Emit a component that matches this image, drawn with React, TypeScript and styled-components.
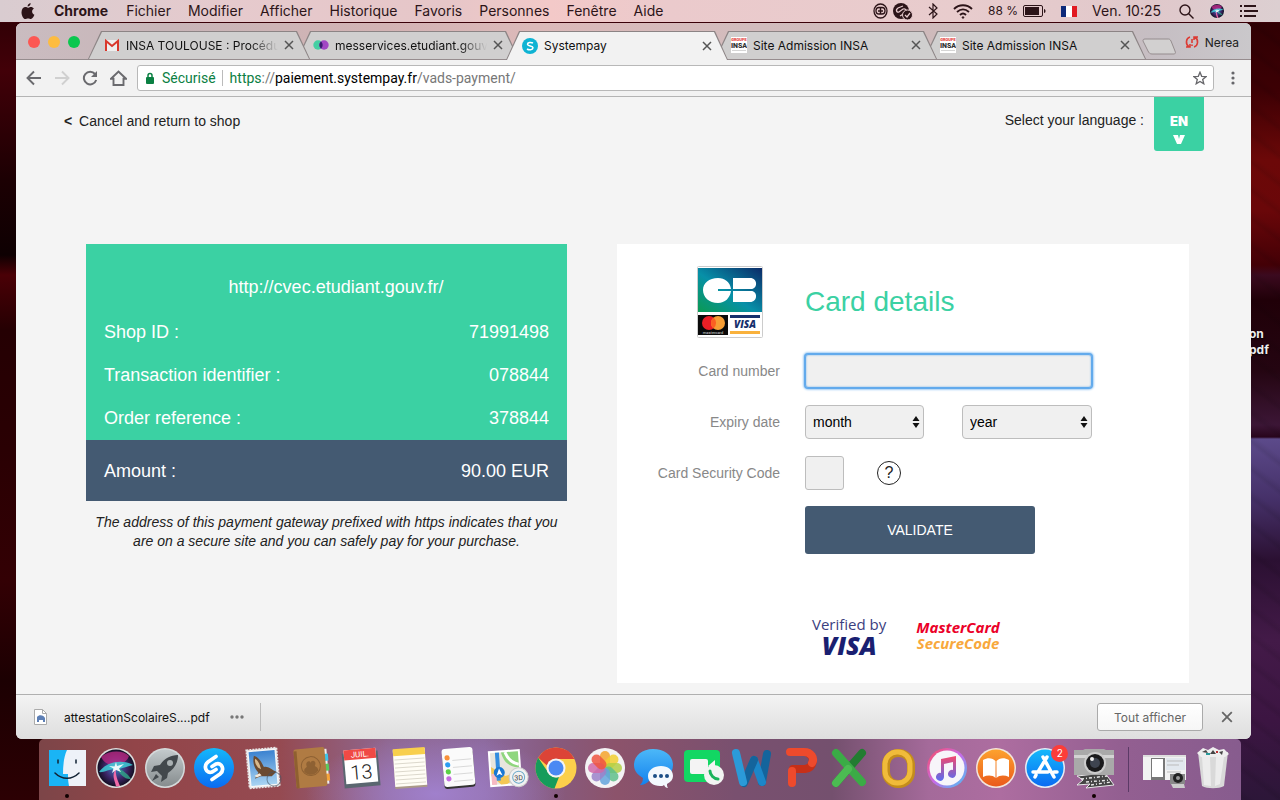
import React from 'react';
import styled, { createGlobalStyle, css } from 'styled-components';

const ui = `Inter, Roboto, "Liberation Sans", sans-serif`;
const body = `"Liberation Sans", Arial, sans-serif`;
const green = '#3bd1a3';
const slate = '#445a72';

const Global = createGlobalStyle`
  *, *::before, *::after { box-sizing: border-box; }
  body { margin: 0; font-family: ${ui}; }
  button, input, select { font: inherit; color: inherit; margin: 0; }
  svg { display: block; flex: none; }
  h1, h2, p, dl, dd { margin: 0; }
`;

const Desktop = styled.div`
  position: relative;
  min-height: 100vh;
  display: flex;
  flex-direction: column;
  overflow: hidden;
  background: linear-gradient(180deg, #2a0004 0, #420008 70px, #1c0003 180px, #0e0002 255px, #4a0006 275px, #250003 330px, #2a0003 450px, #330004 580px, #1c0002 680px, #2c0003 800px);
`;

const RightWallpaper = styled.div`
  position: absolute;
  top: 0;
  right: 0;
  bottom: 0;
  width: 60px;
  background:
    repeating-linear-gradient(38deg, #0000 0 12px, #00000014 16px, #0000 22px),
    linear-gradient(180deg, #2c0003 0, #3c0004 90px, #6c0808 160px, #6a0709 210px, #430006 265px, #3b0a1f 275px, #200008 300px, #240511 370px, #3c1636 425px, #28051c 437px, #5c4a8a 439px, #453068 500px, #2b1032 560px, #431a48 640px, #3c1542 720px, #2c1638 800px);
`;

const FileLabel = styled.span`
  position: absolute;
  top: 326px;
  right: 9px;
  width: 22px;
  font: bold 12px/16px Inter, sans-serif;
  color: #eee;
  text-shadow: 0 1px 2px #000;
`;

const MenuBar = styled.header`
  position: relative;
  display: flex;
  justify-content: space-between;
  height: 23px;
  padding: 0 22px 0 21px;
  border-bottom: 1px solid #3a0008;
  background: linear-gradient(90deg, #d9ccd0 0, #e6cacd 18%, #e6c6c8 35%, #f3c9c8 43%, #ebcacc 52%, #e8cccd 75%, #e0c8cb 90%, #dccfd1 100%);
  color: #2c1418;
  font-size: 14px;
  line-height: 22px;
`;

const MenuGroup = styled.nav<{ $gap: number }>`
  display: flex;
  align-items: center;
  gap: ${(p) => p.$gap}px;
`;

const MenuButton = styled.button<{ $bold?: boolean }>`
  padding: ${(p) => (p.$bold ? '0 1px 0 2px' : '0')};
  border: 0;
  background: none;
  white-space: nowrap;
  font-weight: ${(p) => (p.$bold ? 700 : 400)};
`;

const StatusText = styled.span<{ $small?: boolean }>`
  font-size: ${(p) => (p.$small ? 12 : 14)}px;
  white-space: nowrap;
`;

const StatusPair = styled.span`
  display: flex;
  align-items: center;
  gap: 5px;
`;

const Window = styled.main`
  position: relative;
  flex: 1;
  display: flex;
  flex-direction: column;
  margin: 0 29px 0 16px;
  border-radius: 6px;
  overflow: hidden;
  background: #f4f4f4;
`;

const TabStrip = styled.div`
  display: flex;
  height: 37px;
  padding: 8px 12px 0 12px;
  border-bottom: 1px solid #968c8e;
  background: linear-gradient(90deg, #cabcc0 0, #c8b5b8 12%, #d3b3b4 30%, #dcb9b9 42%, #d2bcbd 60%, #cdb9ba 80%, #c6bfc4 93%, #cac8cb 100%);
`;

const Lights = styled.div`
  display: flex;
  gap: 8px;
  width: 60px;
  padding-top: 5px;
`;

const Light = styled.button<{ $color: string }>`
  width: 12px;
  height: 12px;
  padding: 0;
  border: 0;
  border-radius: 50%;
  background: ${(p) => p.$color};
`;

const Tab = styled.div<{ $active?: boolean; $order: number }>`
  position: relative;
  z-index: ${(p) => (p.$active ? 10 : p.$order)};
  flex: 0 1 222px;
  min-width: 0;
  height: ${(p) => (p.$active ? 29 : 28)}px;
  margin-right: -13px;
  padding: 0 16px 0 16px;
  display: flex;
  align-items: center;
  gap: 6px;
  font-size: 12px;
  color: #111;
  &::before, &::after {
    content: '';
    position: absolute;
    inset: 0;
    z-index: -2;
    background: #8c8485;
    clip-path: polygon(13px 0, calc(100% - 13px) 0, 100% 100%, 0 100%);
  }
  &::after {
    inset: 1px 1px 0 1px;
    z-index: -1;
    background: ${(p) => (p.$active ? '#f2f2f2' : '#d0cfcf')};
  }
`;

const TabTitle = styled.button<{ $fade?: boolean }>`
  flex: 1;
  min-width: 0;
  padding: 0;
  border: 0;
  background: none;
  overflow: hidden;
  text-align: left;
  white-space: nowrap;
  ${(p) => p.$fade && css`mask-image: linear-gradient(90deg, #000 82%, #0000 100%);`}
`;

const IconButton = styled.button`
  display: grid;
  place-items: center;
  flex: none;
  padding: 0;
  border: 0;
  background: none;
`;

const Profile = styled.div`
  display: flex;
  align-items: center;
  gap: 6px;
  height: 22px;
  margin-left: auto;
  font-size: 12px;
  color: #222;
`;

const NewTab = styled(IconButton)`
  margin: 0 0 0 9px;
  align-self: flex-start;
  padding-top: 7px;
`;

const Toolbar = styled.div`
  display: flex;
  align-items: center;
  gap: 12px;
  height: 37px;
  padding: 0 16px 0 10px;
  border-bottom: 1px solid #b4b4b4;
  background: #f2f2f2;
`;

const Omnibox = styled.div`
  flex: 1;
  display: flex;
  align-items: center;
  height: 26px;
  margin: 0 5px 0 -2px;
  padding: 0 6px 0 7px;
  border: 1px solid #b8b8b8;
  border-radius: 3px;
  background: #fff;
  font-family: Roboto, sans-serif;
  font-size: 14px;
  line-height: 16px;
`;

const Secure = styled.span`
  margin-left: 7px;
  padding-right: 6px;
  border-right: 1px solid #bbb;
  color: #0b8043;
`;

const Url = styled.span`
  flex: 1;
  margin-left: 7px;
  color: #777;
  b { font-weight: 400; color: #0b8043; }
  em { font-style: normal; color: #000; }
`;

const Page = styled.div`
  flex: 1;
  font-family: ${body};
  color: #222;
  font-size: 14px;
`;

const PageHeader = styled.header`
  display: flex;
  justify-content: space-between;
  padding: 0 47px 0 48px;
  line-height: 16px;
`;

const Cancel = styled.a`
  margin-top: 16px;
  color: #222;
  text-decoration: none;
  b { margin-right: 3px; }
`;

const Language = styled.div`
  display: flex;
  gap: 10px;
  > span { margin-top: 15px; }
`;

const LanguageButton = styled.button`
  display: flex;
  flex-direction: column;
  align-items: center;
  gap: 7px;
  width: 50px;
  height: 54px;
  padding: 17px 0 0;
  border: 0;
  border-radius: 0 0 3px 3px;
  background: ${green};
  color: #fff;
  font: 900 13px/14px Inter, sans-serif;
`;

const Columns = styled.div`
  display: grid;
  grid-template-columns: 481fr 572fr;
  gap: 50px;
  align-items: start;
  padding: 93px 62px 11px 70px;
`;

const Summary = styled.section`
  color: #fff;
  font-size: 18px;
  line-height: 43px;
`;

const SummaryTop = styled.div`
  padding: 22px 18px 0;
  background: ${green};
`;

const ShopUrl = styled.h1`
  padding-left: 19px;
  margin-bottom: 2px;
  font: inherit;
  text-align: center;
`;

const Line = styled.dl`
  display: flex;
  justify-content: space-between;
`;

const Amount = styled.div`
  padding: 10px 18px 8px;
  background: ${slate};
`;

const Note = styled.p`
  margin-top: 12px;
  color: #222;
  font-size: 14px;
  font-style: italic;
  line-height: 19px;
  text-align: center;
`;

const CardPanel = styled.form`
  padding: 22px 0 27px;
  background: #fff;
`;

const FormGrid = styled.div`
  display: grid;
  grid-template-columns: 163px 287px;
  column-gap: 25px;
  row-gap: 17px;
  align-items: center;
`;

const BrandCell = styled.div`
  display: flex;
  justify-content: flex-end;
  padding-right: 16px;
  height: 71px;
`;

const FormTitle = styled.h2`
  color: ${green};
  font-size: 28px;
  font-weight: 400;
`;

const Label = styled.label`
  color: #888;
  text-align: right;
`;

const Field = styled.input<{ $w: string; $focused?: boolean }>`
  width: ${(p) => p.$w};
  height: 34px;
  padding: 0 8px;
  border: 1px solid ${(p) => (p.$focused ? '#62aaec' : '#bdbdbd')};
  border-radius: 3px;
  outline: 0;
  background: #f0f0f0;
  ${(p) => p.$focused && css`box-shadow: 0 0 0 1px #62aaec, 0 0 2px 2px #a5cff5, inset 0 0 2px #62aaec;`}
`;

const FieldRow = styled.div<{ $gap: number }>`
  display: flex;
  align-items: center;
  gap: ${(p) => p.$gap}px;
`;

const SelectBox = styled.div<{ $grow: number }>`
  flex: ${(p) => p.$grow} 1 0;
  display: grid;
  align-items: center;
  > * { grid-area: 1 / 1; }
  svg { justify-self: end; margin-right: 4px; pointer-events: none; }
`;

const Select = styled.select`
  appearance: none;
  width: 100%;
  height: 34px;
  padding: 0 7px;
  border: 1px solid #bdbdbd;
  border-radius: 4px;
  background: #f0f0f0;
  color: #000;
`;

const Help = styled.button`
  width: 24px;
  height: 24px;
  padding: 0;
  border: 1px solid #222;
  border-radius: 50%;
  background: #fff;
  font-size: 16px;
  line-height: 22px;
`;

const Actions = styled.div`
  margin: 16px 0 0 188px;
`;

const Validate = styled.button`
  width: 230px;
  height: 48px;
  border: 0;
  border-radius: 3px;
  background: ${slate};
  color: #fff;
`;

const Trust = styled.div`
  display: flex;
  align-items: center;
  gap: 30px;
  margin: 60px 0 0 7px;
`;

const TrustMark = styled.div`
  font-family: "Open Sans", sans-serif;
  text-align: center;
`;

const MarkLine = styled.div<{ $color: string; $size: number; $lh: number; $weight: number; $slant?: boolean }>`
  color: ${(p) => p.$color};
  font-size: ${(p) => p.$size}px;
  line-height: ${(p) => p.$lh}px;
  font-weight: ${(p) => p.$weight};
  font-style: ${(p) => (p.$slant ? 'italic' : 'normal')};
`;

const Downloads = styled.footer`
  display: flex;
  align-items: center;
  height: 45px;
  padding: 0 18px;
  border-top: 1px solid #b0b0b0;
  background: linear-gradient(#f3f3f3, #dedede);
  color: #111;
  font-size: 12px;
`;

const FileName = styled.a`
  margin: 0 20px 0 17px;
  color: #111;
  text-decoration: none;
`;

const Divider = styled.span`
  width: 1px;
  height: 28px;
  margin-left: 16px;
  background: #bbb;
`;

const ShowAll = styled.button`
  width: 106px;
  height: 28px;
  margin: 0 18px 0 auto;
  padding: 0;
  border: 1px solid #aaa;
  border-radius: 3px;
  background: linear-gradient(#fff, #f6f6f6);
  color: #666;
`;

const Dock = styled.nav`
  position: relative;
  display: flex;
  height: 61px;
  margin: 0 39px;
  padding: 0 4px;
  border-radius: 5px 5px 0 0;
  background:
    radial-gradient(ellipse 130px 60px at 33% 90%, #a080cc, #a080cc00),
    linear-gradient(90deg, #7c4548 0, #924549 8%, #954a51 20%, #8f6790 29%, #8d6a9e 37%, #875a7d 43%, #8c536b 48%, #79506f 58%, #74506e 66%, #a46a9a 74%, #ad6da0 80%, #935f91 90%, #875c8e 100%);
`;

const DockItem = styled.button<{ $running?: boolean }>`
  position: relative;
  flex: 1 1 0;
  min-width: 0;
  display: flex;
  justify-content: center;
  padding: 8px 0 0;
  border: 0;
  background: none;
  svg { overflow: visible; }
  ${(p) => p.$running && css`
    &::after {
      content: '';
      position: absolute;
      bottom: 2px;
      left: calc(50% - 2px);
      width: 4px;
      height: 4px;
      border-radius: 50%;
      background: #100;
    }
  `}
`;

const DockRule = styled.span`
  width: 1px;
  height: 45px;
  margin: 8px 10px 0 10px;
  background: #5b3a66;
`;

const Badge = styled.span`
  position: absolute;
  top: 6px;
  right: 1px;
  width: 17px;
  height: 17px;
  border-radius: 50%;
  background: #fc3d39;
  color: #fff;
  font-size: 10px;
  line-height: 17px;
`;

const Cross = ({ size = 10, color = '#555' }: { size?: number; color?: string }) => (
  <svg width={size} height={size} viewBox="0 0 10 10" stroke={color} strokeWidth="1.5"><path d="M1 1l8 8M9 1L1 9" /></svg>
);

const SiriArt = () => (
  <>
    <circle cx="21" cy="21" r="20" fill="#ddd" />
    <circle cx="21" cy="21" r="18.5" fill="url(#siri)" />
    <path d="M6 10C14 3 28 3 34 9C32 15 26 17 21 20C14 18 9 16 6 10Z" fill="#c02a86" opacity=".75" />
    <path d="M4 25C12 14 28 12 38 18C30 20 26 22 21 22C14 22 8 26 4 25Z" fill="#3ecfd8" opacity=".85" />
    <path d="M21 21C20 28 23 34 25 39L21 39.500C20 33 16 29 21 21Z" fill="#f06aa8" />
    <path d="M21 21C27 22 34 28 36 32C30 33 25 27 21 21Z" fill="#2fa98a" opacity=".8" />
    <path d="M21 15L22 19L29 17L24 21.500L26 25L21 23L17 26L18.500 21.500L14 19L19.500 19.500Z" fill="#fff" opacity=".9" />
  </>
);

const INSA = () => (
  <svg width="16" height="16" viewBox="0 0 16 16">
    <path fill="#fff" d="M0 0h16v16H0z" />
    <text x="8" y="4" fontSize="4" fontWeight="900" fill="#e5403a" textAnchor="middle" fontFamily="Roboto">GROUPE</text>
    <text x="8" y="11" fontSize="7" fontWeight="900" fill="#333" textAnchor="middle" fontFamily="Roboto">INSA</text>
    <path stroke="#aaa" strokeWidth=".5" d="M1 13.500h14" />
  </svg>
);

const favicons: Record<string, React.ReactNode> = {
  gmail: (
    <svg width="16" height="16" viewBox="0 0 16 16"><path fill="#eee" d="M1 3h14v11H1z" /><path fill="none" stroke="#d9382c" strokeWidth="2" d="M2 14V4l6 5 6-5v10" /></svg>
  ),
  mes: (
    <svg width="16" height="16" viewBox="0 0 16 16"><circle cx="5" cy="8" r="4.700" fill="#43cfa3" /><circle cx="11" cy="8" r="4.700" fill="#a247c4" /><path fill="#3a1c70" d="M8 4.400a4.700 4.700 0 0 1 0 7.200a4.700 4.700 0 0 1 0-7.200" /></svg>
  ),
  pay: (
    <svg width="16" height="16" viewBox="0 0 16 16"><circle cx="8" cy="8" r="8" fill="#0eb3d3" /><path fill="none" stroke="#fff" strokeWidth="1.500" d="M11 5C9 4 5.500 4.200 5.500 6.300S11 7.700 11 9.800S7 12.300 5 11" /></svg>
  ),
  insa: <INSA />,
};

const tabs = [
  { icon: 'gmail', title: 'INSA TOULOUSE : Procédure', fade: true },
  { icon: 'mes', title: 'messervices.etudiant.gouv.fr', fade: true },
  { icon: 'pay', title: 'Systempay', active: true },
  { icon: 'insa', title: 'Site Admission INSA' },
  { icon: 'insa', title: 'Site Admission INSA' },
];

const petals = ['#f4a52c', '#f2cf30', '#b3cf45', '#5fbf8a', '#63a5dc', '#9a82c9', '#d06aa8', '#ee5540'];

const dockIcons: { name: string; running?: boolean; badge?: string; art: React.ReactNode }[] = [
  { name: 'Finder', running: true, art: <>
    <path fill="#1ab4f5" d="M3 3h37v36H3z" /><path fill="#eef2f8" d="M21 3h19v36H23c-1-5-1-8-1-12h-5C17 18 18 9 21 3z" />
    <path fill="none" stroke="#123" strokeWidth="1.500" strokeLinecap="round" d="M12 13v3M30 13v3M9 26c7 7 17 7 24 0" /></> },
  { name: 'Siri', art: <SiriArt /> },
  { name: 'Launchpad', art: <>
    <circle cx="21" cy="21" r="20" fill="#d5dadb" /><circle cx="21" cy="21" r="18.500" fill="url(#silver)" />
    <path fill="#42484c" d="M34 8C26 8 20 12 16 18L10 19L7 25L13 24L18 29L17 35L23 31L24 26C30 22 34 16 34 8ZM12 27L8 34L15 30Z" /><circle cx="26" cy="16" r="3" fill="#a9b0b2" /></> },
  { name: 'Shazam', art: <>
    <circle cx="21" cy="21" r="20" fill="url(#blue)" />
    <path fill="none" stroke="#fff" strokeWidth="3.700" strokeLinecap="round" d="M23 9.500L15 15C10 19 13 27 19 25L23 22.500M19 32.500L27 27C32 23 29 15 23 17L19 19.500" /></> },
  { name: 'Mail', art: <g transform="rotate(-5 21 21)">
    <path fill="#f7f7f7" stroke="#e8e8e8" strokeWidth="2" strokeDasharray="2 1" d="M6 2h30v38H6z" /><path fill="url(#sky)" d="M8 4h26v34H8z" />
    <path fill="#6b4a30" d="M13 8C18 10 20 15 22 20C26 19 29 23 34 26L29 30L18 29L12 31L16 25C12 20 11 14 13 8Z" /><path fill="#d8b98b" d="M14 11c3 2 4 6 5 11l-3-2c-2-3-3-6-2-9z" /><path fill="#f2e8da" d="M12 28l5-2 2 2-5 2z" /><circle cx="31" cy="33" r="7" fill="none" stroke="#456" opacity=".6" /></g> },
  { name: 'Contacts', art: <g transform="rotate(-5 21 21)">
    <path fill="#efefef" d="M33 3h4v35h-4z" /><path fill="#3fc6e8" d="M34 8h4v7h-4z" /><path fill="#5cc85c" d="M34 18h4v7h-4z" /><path fill="#f5a43a" d="M34 28h4v7h-4z" />
    <rect x="4" y="1" width="31" height="39" rx="2" fill="#b07b43" /><path fill="#8f6030" d="M4 3h3v37H4z" /><circle cx="20" cy="19" r="9.500" fill="none" stroke="#8e6133" /><path fill="#8e6133" d="M13 24c0-4 2-3 3-5-2-5 4-7 4-3 1-4 7-2 4 3 1 2 3 1 3 5-4 5-10 5-14 0" /></g> },
  { name: 'Calendar', art: <g transform="rotate(-5 21 21)">
    <path fill="#5a6670" d="M3 5h36v35H3z" /><path fill="#fff" d="M5 2h32v34H5z" /><path fill="#f04a45" d="M5 2h32v10H5z" />
    <text x="21" y="10" fontSize="8" fill="#fff" textAnchor="middle" fontFamily="Roboto">JUIL.</text><text x="21" y="32" fontSize="20" fill="#222" textAnchor="middle" fontWeight="300" fontFamily="Roboto">13</text></g> },
  { name: 'Notes', art: <g transform="rotate(-4 21 21)">
    <path fill="#a98" d="M5 5h32v36H5z" /><path fill="#fffdf5" d="M5 2h32v37H5z" /><path fill="#f8cf4c" d="M5 1h32v7H5z" /><path stroke="#cfcabd" strokeWidth=".7" d="M6 12h30M6 16h30M6 20h30M6 24h30M6 28h30M6 32h30M6 36h30" /></g> },
  { name: 'Rappels', art: <g transform="rotate(-5 21 21)">
    <rect x="6" y="4" width="31" height="37" rx="3" fill="#333" /><rect x="6" y="1" width="31" height="38" rx="3" fill="#fbfbfb" />
    <circle cx="11" cy="10" r="2.600" fill="#f9913a" /><circle cx="11" cy="17" r="2.600" fill="#2a9df2" /><circle cx="11" cy="24" r="2.600" fill="#5bd147" /><circle cx="11" cy="31" r="2.600" fill="#c56be0" />
    <path stroke="#ccc" strokeWidth=".7" d="M16 13h19M16 20h19M16 27h19M16 34h19" /></g> },
  { name: 'Plans', art: <g transform="rotate(-4 21 21)">
    <path fill="#fff" d="M3 3h32v36H3z" /><path fill="#e8e6de" d="M5 5h28v32H5z" /><path fill="#8fd67e" d="M16 5h17v16c-9 0-15-6-17-16z" /><path fill="#f3c755" d="M5 19l14 10 14-4v5l-13 7H14L5 28z" /><path fill="#f6b9c3" d="M5 26h5v11H5z" />
    <path fill="none" stroke="#fff" strokeWidth="3" d="M20 5c3 9 8 12 13 13" /><path stroke="#338de0" strokeWidth="4" d="M12 5v28" />
    <circle cx="13" cy="25" r="5.500" fill="#1878d4" /><path fill="#fff" d="M13 21l3 7-3-1.500-3 1.500z" /><circle cx="32" cy="31" r="9.500" fill="#f2f2f2" stroke="#ccc" /><circle cx="32" cy="31" r="6" fill="none" stroke="#6ba9c8" /><text x="32" y="34" fontSize="7" textAnchor="middle" fontFamily="Roboto" fill="#444">3D</text></g> },
  { name: 'Chrome', running: true, art: <>
    <circle cx="21" cy="21" r="20.500" fill="#fcd04b" /><path fill="#dc4437" d="M3.200 10.800A20.500 20.500 0 0 1 39.500 12H21a9 9 0 0 0-8.500 7z" /><path fill="#159c5b" d="M3.200 10.800L13.200 25.500A9 9 0 0 0 24 30L19.500 41.400A20.500 20.500 0 0 1 3.200 10.800" />
    <circle cx="21" cy="21" r="9.500" fill="#f4f4f4" /><circle cx="21" cy="21" r="7.500" fill="#4a89f3" /></> },
  { name: 'Photos', art: <>
    <circle cx="21" cy="21" r="20" fill="#f4f2f4" />
    {petals.map((c, i) => <rect key={c} x="16" y="4" width="10" height="17" rx="5" fill={c} opacity=".85" transform={`rotate(${i * 45} 21 21)`} />)}</> },
  { name: 'Messages', art: <>
    <path fill="url(#blue2)" d="M20 2C9 2 1 9 1 18c0 6 4 10 9 13 0 3-1 5-3 7 4 0 7-2 9-4 14 1 24-6 24-16S31 2 20 2z" /><path fill="#f3f8fd" d="M28 19c-7 0-13 4-13 10s5 10 12 10c2 0 3 0 4-1 1 2 2 3 4 3-1-1-1-3-1-4 4-2 6-5 6-8 0-6-5-10-12-10z" />
    <circle cx="22" cy="29" r="2" fill="#1c4f86" /><circle cx="28" cy="29" r="2" fill="#1c4f86" /><circle cx="34" cy="29" r="2" fill="#1c4f86" /></> },
  { name: 'FaceTime', art: <>
    <rect x="2" y="3" width="36" height="32" rx="4" fill="#12d763" /><rect x="8" y="12" width="18" height="15" rx="2" fill="#f4f4f4" /><path fill="#f4f4f4" d="M26 19l7-6v13z" />
    <circle cx="32" cy="28" r="10" fill="#f2f4f2" /><path fill="none" stroke="#1bb35a" strokeWidth="3" strokeLinecap="round" d="M28 24c0 4 4 8 8 8" /></> },
  { name: 'Word', art: <g fill="none" strokeWidth="8" strokeLinecap="round" strokeLinejoin="round">
    <path stroke="#14649c" d="M31 35L36 7" /><path stroke="#1c86c8" d="M23 13L31 35" /><path stroke="#14649c" d="M13 36L23 13" /><path stroke="#2b9ad8" d="M5 6L12 35" /></g> },
  { name: 'PowerPoint', art: <g fill="none" strokeWidth="8" strokeLinecap="round" strokeLinejoin="round">
    <path stroke="#c62f18" d="M29 7c6 3 5 14-4 15H13" /><path stroke="#ee4a2c" d="M10 5h14c7 0 11 6 8 11M12 24v12" /></g> },
  { name: 'Excel', art: <g fill="none" strokeWidth="8" strokeLinecap="round">
    <path stroke="#227c31" d="M34 6L8 36" /><path stroke="#3bab46" d="M8 6L34 35" /><path stroke="#4cbb52" d="M20 22L8 36" /></g> },
  { name: 'Outlook', art: <>
    <rect x="9" y="6" width="25" height="31" rx="12" fill="none" stroke="#c48d1b" strokeWidth="8" /><rect x="8" y="5" width="25" height="31" rx="12" fill="none" stroke="#f0bb3a" strokeWidth="5" /></> },
  { name: 'iTunes', art: <>
    <circle cx="21" cy="21" r="20" fill="url(#tunes)" /><circle cx="21" cy="21" r="17.500" fill="#f7f5fa" />
    <path fill="url(#note)" d="M15 12l15-3v18a4 4 0 1 1-3-4v-8l-9 2v13a4 4 0 1 1-3-4z" /></> },
  { name: 'iBooks', art: <>
    <circle cx="21" cy="21" r="20" fill="#f2e5dc" /><circle cx="21" cy="21" r="18.500" fill="url(#orange)" />
    <path fill="#fff" d="M8 13c5-3 10-2 12.500 1v17c-3-3-8-3-12.500-1zM34 13c-5-3-10-2-12.500 1v17c3-3 8-3 12.500-1z" /></> },
  { name: 'App Store', badge: '2', art: <>
    <circle cx="21" cy="21" r="20" fill="#e8eef5" /><circle cx="21" cy="21" r="18.500" fill="url(#blue)" />
    <path fill="none" stroke="#fff" strokeWidth="3.500" strokeLinecap="round" d="M19 10L30 30M23 10L14 25M9 25h15M30 25h3M11 30l1-2" /></> },
  { name: 'Capture', running: true, art: <>
    <path fill="#444" d="M4 29l28-3 9 12-28 3 4-4-13 1 6-5z" /><path fill="none" stroke="#e8e8e8" strokeWidth="1" d="M4 29l28-3 9 12-28 3 4-4-13 1 6-5z" /><path stroke="#e8e8e8" strokeWidth="1.500" strokeDasharray="3 2 1 2" d="M8 32l26-3M13 35l25-2M18 38l20-3" />
    <path fill="#a9a9a9" d="M1 3h9l2-1h19l2 1h8v25H1z" /><path fill="#d3d3d3" d="M1 8h40v3H1z" /><circle cx="22" cy="16" r="11" fill="#ccc" /><circle cx="22" cy="16" r="9" fill="#1a1a1c" /><circle cx="22" cy="16" r="5" fill="#3e4450" /><circle cx="19" cy="12" r="2" fill="#eee" /></> },
];

const trayIcons: { name: string; art: React.ReactNode }[] = [
  { name: 'Fenêtre réduite', art: <>
    <path fill="#f2f2f2" d="M0 8h43v25H0z" /><path fill="#ddd" d="M0 8h43v2H0z" /><path fill="#777" d="M8 11h14v22H8z" /><path fill="#fff" d="M9 12h11v18H9z" /><path fill="#e2e8ee" d="M23 11h19v12H23z" /><path stroke="#bbb" d="M24 14h16M24 18h12M24 25h14" />
    <path fill="#888" d="M27 27h15v10H27z" /><circle cx="35" cy="31" r="5" fill="#222" /><circle cx="35" cy="31" r="2" fill="#999" /><path fill="#ccc" d="M28 37h13l1 4H30z" /></> },
  { name: 'Corbeille', art: <>
    <path fill="#d9d9d9" d="M6 5h30l-4 34c-5 3-17 3-22 0z" /><path fill="#ececec" d="M10 10h8l1 29-7-1zM24 10h8l-4 27-5 2z" />
    <path fill="#eee" d="M5 6l6-5 5 2 5-3 6 3 5-1 5 5-4 3H9z" /><path fill="#444" d="M10 5l4-2 2 3zM18 7l3-4 3 4zM27 5l4-1-1 4z" /><path fill="#2a9a9a" d="M14 6h4v2h-4z" /><path fill="#b33" d="M24 4h2v2h-2z" /></> },
];

const Gradients = () => (
  <svg width="0" height="0">
    <defs>
      <radialGradient id="siri"><stop offset="0" stopColor="#3a7fc8" /><stop offset=".6" stopColor="#3d2668" /><stop offset="1" stopColor="#130f22" /></radialGradient>
      <linearGradient id="silver" x2="0" y2="1"><stop stopColor="#c3cacc" /><stop offset="1" stopColor="#868c8e" /></linearGradient>
      <linearGradient id="blue" x2="0" y2="1"><stop stopColor="#15b8fb" /><stop offset="1" stopColor="#0a6bf2" /></linearGradient>
      <linearGradient id="blue2" x2="0" y2="1"><stop stopColor="#4cb8f8" /><stop offset="1" stopColor="#1382ee" /></linearGradient>
      <linearGradient id="sky" x2="0" y2="1"><stop stopColor="#3b82d0" /><stop offset="1" stopColor="#a9d4f2" /></linearGradient>
      <linearGradient id="orange" x2="0" y2="1"><stop stopColor="#fda22e" /><stop offset="1" stopColor="#ea5a1c" /></linearGradient>
      <linearGradient id="tunes" x2="1" y2="1"><stop stopColor="#fb4a5e" /><stop offset=".5" stopColor="#c86ae8" /><stop offset="1" stopColor="#3fc8f5" /></linearGradient>
      <linearGradient id="note" x2="0" y2="1"><stop stopColor="#f4486e" /><stop offset="1" stopColor="#5a6cf0" /></linearGradient>
      <linearGradient id="cb" x1="0" y1="1" x2="1" y2="0"><stop stopColor="#0b9a52" /><stop offset=".45" stopColor="#0790a8" /><stop offset="1" stopColor="#0b2a68" /></linearGradient>
    </defs>
  </svg>
);

const GradientHolder = styled.div`
  position: absolute;
`;

const CardBrands = () => (
  <svg width="67" height="72" viewBox="0 0 67 72">
    <rect x=".5" y=".5" width="65" height="71" rx="1" fill="#fff" stroke="#ccc" />
    <path fill="url(#cb)" d="M1 2h64v44H1z" />
    <path fill="#fff" d="M34 23H21v2h13c-1 7-6 12-13 12C12 37 6 31 6 24s6-12 15-12c7 0 12 4 13 11zM36 12h17c8 0 8 11 1 11H36zM36 25h18c7 0 7 11-1 11H36z" />
    <path fill="#0a0a0a" d="M1 49h30v20H1z" /><circle cx="12" cy="57" r="7" fill="#ea1f26" /><circle cx="21" cy="57" r="7" fill="#f79e34" /><path fill="#fb6022" d="M16.500 51.600a7 7 0 0 1 0 10.800a7 7 0 0 1 0-10.800" />
    <text x="16" y="68" fontSize="4" fill="#ddd" textAnchor="middle" fontFamily="Roboto">mastercard</text>
    <path fill="#16306c" d="M33 49h30v3H33z" /><path fill="#f9b13c" d="M33 65h30v3H33z" />
    <text x="48" y="62" fontSize="10" fontWeight="800" fontStyle="italic" fill="#16306c" textAnchor="middle" fontFamily="Open Sans">VISA</text>
  </svg>
);

const Arrows = () => (
  <svg width="8" height="14" viewBox="0 0 8 14" fill="#111"><path d="M4 1l3.500 5h-7zM4 13l3.500-5h-7z" /></svg>
);

const menus = ['Fichier', 'Modifier', 'Afficher', 'Historique', 'Favoris', 'Personnes', 'Fenêtre', 'Aide'];
const details = [['Shop ID :', '71991498'], ['Transaction identifier :', '078844'], ['Order reference :', '378844']];

export default function App() {
  return (
    <Desktop>
      <Global />
      <GradientHolder><Gradients /></GradientHolder>
      <RightWallpaper />
      <FileLabel>on<br />pdf</FileLabel>
      <MenuBar>
        <MenuGroup $gap={17}>
          <svg width="14" height="17" viewBox="0 0 14 17" fill="#2c1418"><path d="M9.600 0c.2 2-1.400 3.600-3 3.600C6.400 1.900 8 .2 9.600 0zM6.900 4.800c.8 0 1.600-.8 3-.8 1.200 0 2.300.6 3 1.600-2.600 1.600-2.200 5 .5 6.200-.7 2-2 4.200-3.500 4.200-1 0-1.500-.6-2.800-.6s-1.900.6-2.800.6C2.400 16 .5 12.500.5 9.200.5 6 2.500 4.100 4.500 4.100c1 0 1.800.7 2.400.7z" /></svg>
          <MenuButton $bold>Chrome</MenuButton>
          {menus.map((m) => <MenuButton key={m}>{m}</MenuButton>)}
        </MenuGroup>
        <MenuGroup $gap={15} aria-label="État">
          <StatusPair>
            <svg width="15" height="16" viewBox="0 0 15 16" fill="none" stroke="#2c1418"><ellipse cx="7.500" cy="8" rx="6.500" ry="7" strokeWidth="1.300" /><rect x="3" y="4.500" width="9" height="6.500" rx="3" strokeWidth="1.300" /><path d="M7.500 5v6M5 8h5" strokeWidth="1.500" /></svg>
            <svg width="20" height="17" viewBox="0 0 20 17"><circle cx="8" cy="8" r="8" fill="#2c1418" /><path fill="none" stroke="#e6cacd" strokeWidth="1.300" d="M10 3L5 5c-3 2-1 5 1 4l4-3c3-1 5 3 2 4l-5 3" /><circle cx="14.500" cy="12" r="5" fill="#2c1418" stroke="#e6cacd" /><path fill="none" stroke="#e6cacd" strokeWidth="1.300" d="M12 12l2 2 3-4" /></svg>
          </StatusPair>
          <svg width="10" height="16" viewBox="0 0 10 16" fill="none" stroke="#2c1418" strokeWidth="1.200"><path d="M1 4l8 7-4 4V1l4 4-8 7" /></svg>
          <svg width="20" height="15" viewBox="0 0 20 15" fill="none" stroke="#2c1418" strokeWidth="1.900"><path d="M1 5c5-5 13-5 18 0M4 8c4-3.500 8-3.500 12 0M7 11c2-2 4-2 6 0" /><circle cx="10" cy="13.500" r=".8" fill="#2c1418" strokeWidth="1" /></svg>
          <StatusPair>
            <StatusText $small>88 %</StatusText>
            <svg width="23" height="12" viewBox="0 0 23 12"><rect x=".5" y=".5" width="19" height="11" rx="1.500" fill="none" stroke="#2c1418" /><path fill="#2c1418" d="M2 2h14v8H2zM21 4c2 0 2 4 0 4z" /></svg>
          </StatusPair>
          <svg width="16" height="11" viewBox="0 0 16 11"><path fill="#0d2a7a" d="M0 0h5v11H0z" /><path fill="#fff" d="M5 0h6v11H5z" /><path fill="#e11a22" d="M11 0h5v11h-5z" /></svg>
          <StatusText>Ven. 10:25</StatusText>
          <svg width="18" height="15" viewBox="0 0 18 15" fill="none" stroke="#2c1418" strokeWidth="1.400"><circle cx="9" cy="6" r="5" /><path d="M12.500 9.500l5 5" /></svg>
          <svg width="16" height="16" viewBox="0 0 42 42"><SiriArt /></svg>
          <svg width="18" height="12" viewBox="0 0 18 12" stroke="#2c1418" strokeWidth="2"><path d="M0 1h2M4 1h12M0 6h2M4 6h14M0 11h2M4 11h12" /></svg>
        </MenuGroup>
      </MenuBar>

      <Window>
        <TabStrip>
          <Lights>
            <Light $color="#fc5753" aria-label="Fermer" />
            <Light $color="#fdbc40" aria-label="Réduire" />
            <Light $color="#0bc74f" aria-label="Agrandir" />
          </Lights>
          {tabs.map((t, i) => (
            <Tab key={i} $active={t.active} $order={5 - i}>
              {favicons[t.icon]}
              <TabTitle $fade={t.fade}>{t.title}</TabTitle>
              <IconButton aria-label="Fermer l'onglet"><Cross /></IconButton>
            </Tab>
          ))}
          <NewTab aria-label="Nouvel onglet">
            <svg width="34" height="17" viewBox="0 0 34 17"><path fill="#d2d0d0" stroke="#958c8e" d="M3 1h23c1 0 2 0 3 2l4 10c1 2 0 3-1 3H10c-2 0-3-1-4-3L1 3c0-1 0-2 2-2z" /></svg>
          </NewTab>
          <Profile>
            <svg width="14" height="14" viewBox="0 0 14 14" fill="none" stroke="#dc3b34" strokeWidth="1.600"><path d="M5 2c-4 1-5 7-1 10M1 12h4V9M9 12c4-1 5-7 1-10M13 2H9v3M7 4v4M7 9.500V11" /></svg>
            Nerea
          </Profile>
        </TabStrip>

        <Toolbar>
          <IconButton aria-label="Retour"><svg width="16" height="16" viewBox="0 0 16 16" fill="none" stroke="#6a6a6e" strokeWidth="1.900"><path d="M15 8H2M8 1.500L1.500 8 8 14.500" /></svg></IconButton>
          <IconButton aria-label="Suivant"><svg width="16" height="16" viewBox="0 0 16 16" fill="none" stroke="#d0d0d0" strokeWidth="1.900"><path d="M1 8h13M8 1.500L14.500 8 8 14.500" /></svg></IconButton>
          <IconButton aria-label="Actualiser"><svg width="16" height="16" viewBox="0 0 16 16"><path fill="none" stroke="#6a6a6e" strokeWidth="2" d="M13 4a6.300 6.300 0 1 0 1.200 6" /><path fill="#6a6a6e" d="M15 1v6H9z" /></svg></IconButton>
          <IconButton aria-label="Accueil"><svg width="17" height="16" viewBox="0 0 17 16" fill="none" stroke="#6a6a6e" strokeWidth="1.900"><path d="M1 8.700L8.500 1.500 16 8.700h-2.500V15h-10V8.700z" /></svg></IconButton>
          <Omnibox role="textbox" aria-label="Adresse">
            <svg width="10" height="13" viewBox="0 0 10 13"><rect x="1" y="5" width="8" height="7" rx="1" fill="#0b8043" /><path fill="none" stroke="#0b8043" strokeWidth="1.500" d="M3 6V3.500a2 2 0 0 1 4 0V6" /></svg>
            <Secure>Sécurisé</Secure>
            <Url><b>https</b>://<em>paiement.systempay.fr</em>/vads-payment/</Url>
            <IconButton aria-label="Ajouter aux favoris"><svg width="14" height="14" viewBox="0 0 14 14" fill="none" stroke="#66666a" strokeWidth="1.300"><path d="M7 1.200l1.700 4.100 4.400.3-3.400 2.900 1.100 4.300L7 10.500l-3.800 2.300 1.100-4.300L.9 5.600l4.400-.3z" /></svg></IconButton>
          </Omnibox>
          <IconButton aria-label="Menu"><svg width="4" height="14" viewBox="0 0 4 14" fill="#66666a"><circle cx="2" cy="2" r="1.600" /><circle cx="2" cy="7" r="1.600" /><circle cx="2" cy="12" r="1.600" /></svg></IconButton>
        </Toolbar>

        <Page>
          <PageHeader>
            <Cancel href="#"><b>&lt;</b> Cancel and return to shop</Cancel>
            <Language>
              <span>Select your language :</span>
              <LanguageButton>
                EN
                <svg width="12" height="9" viewBox="0 0 12 9"><path fill="#fff" d="M0 0h5l1 4 1-4h5L8 9H4z" /></svg>
              </LanguageButton>
            </Language>
          </PageHeader>

          <Columns>
            <Summary>
              <SummaryTop>
                <ShopUrl>http://cvec.etudiant.gouv.fr/</ShopUrl>
                {details.map(([k, v]) => <Line key={k}><dt>{k}</dt><dd>{v}</dd></Line>)}
              </SummaryTop>
              <Amount><Line><dt>Amount :</dt><dd>90.00 EUR</dd></Line></Amount>
              <Note>The address of this payment gateway prefixed with https indicates that you are on a secure site and you can safely pay for your purchase.</Note>
            </Summary>

            <CardPanel>
              <FormGrid>
                <BrandCell><CardBrands /></BrandCell>
                <FormTitle>Card details</FormTitle>
                <Label htmlFor="number">Card number</Label>
                <Field id="number" $w="100%" $focused />
                <Label htmlFor="month">Expiry date</Label>
                <FieldRow $gap={38}>
                  <SelectBox $grow={119}><Select id="month"><option>month</option></Select><Arrows /></SelectBox>
                  <SelectBox $grow={130}><Select aria-label="Expiry year"><option>year</option></Select><Arrows /></SelectBox>
                </FieldRow>
                <Label htmlFor="csc">Card Security Code</Label>
                <FieldRow $gap={33}>
                  <Field id="csc" $w="39px" />
                  <Help type="button">?</Help>
                </FieldRow>
              </FormGrid>
              <Actions>
                <Validate type="button">VALIDATE</Validate>
                <Trust>
                  <TrustMark>
                    <MarkLine $color="#3b4080" $size={15} $lh={20} $weight={400}>Verified by</MarkLine>
                    <MarkLine $color="#1a1f71" $size={25} $lh={22} $weight={800} $slant>VISA</MarkLine>
                  </TrustMark>
                  <TrustMark>
                    <MarkLine $color="#eb0028" $size={15} $lh={16} $weight={700} $slant>MasterCard</MarkLine>
                    <MarkLine $color="#f8a83c" $size={15} $lh={16} $weight={700} $slant>SecureCode</MarkLine>
                  </TrustMark>
                </Trust>
              </Actions>
            </CardPanel>
          </Columns>
        </Page>

        <Downloads>
          <svg width="13" height="16" viewBox="0 0 13 16"><path fill="#fff" stroke="#aaa" d="M.5.5h8l4 4v11H.5z" /><path fill="none" stroke="#aaa" d="M8.500.5v4h4" /><path fill="#5d7fb5" d="M3 8c2-3 7-2 8 1v4H9v-2H5v2H3z" /></svg>
          <FileName href="#">attestationScolaireS....pdf</FileName>
          <IconButton aria-label="Options"><svg width="14" height="4" viewBox="0 0 14 4" fill="#777"><circle cx="2" cy="2" r="1.700" /><circle cx="7" cy="2" r="1.700" /><circle cx="12" cy="2" r="1.700" /></svg></IconButton>
          <Divider />
          <ShowAll>Tout afficher</ShowAll>
          <IconButton aria-label="Fermer la barre"><Cross size={12} color="#666" /></IconButton>
        </Downloads>
      </Window>

      <Dock aria-label="Dock">
        {dockIcons.map((d) => (
          <DockItem key={d.name} $running={d.running} aria-label={d.name}>
            <svg width="42" height="42" viewBox="0 0 42 42">{d.art}</svg>
            {d.badge && <Badge>{d.badge}</Badge>}
          </DockItem>
        ))}
        <DockRule />
        {trayIcons.map((d) => (
          <DockItem key={d.name} aria-label={d.name}><svg width="42" height="42" viewBox="0 0 42 42">{d.art}</svg></DockItem>
        ))}
      </Dock>
    </Desktop>
  );
}
